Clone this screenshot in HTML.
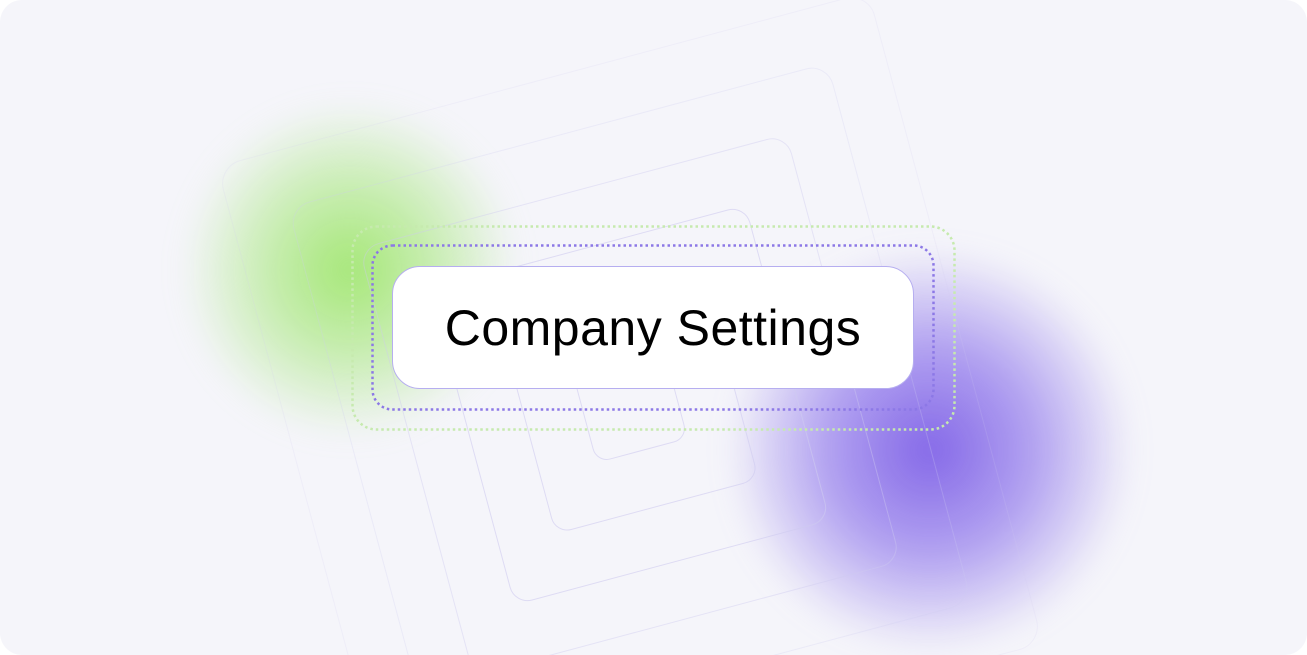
<!DOCTYPE html>
<html><head><style>
html,body{margin:0;padding:0;background:#fff;overflow:hidden;width:1307px;height:655px;}
.wrap{position:relative;width:1307px;height:655px;overflow:hidden;background:#f5f5fa;border-radius:22px;}
.blob{position:absolute;border-radius:50%;}
.card{position:absolute;left:392px;top:266px;width:520px;height:121px;background:#fff;border:1px solid #b6aef0;border-radius:28px;display:flex;align-items:center;justify-content:center;font-family:"Liberation Sans",sans-serif;font-size:50px;color:#000;letter-spacing:0.5px;}
</style></head><body>
<div class="wrap">
<div class="blob" style="left:180px;top:100px;width:340px;height:340px;background:radial-gradient(circle,rgba(160,230,110,0.95) 0%,rgba(170,232,130,0.6) 35%,rgba(200,240,180,0) 70%);filter:blur(14px);"></div>
<div class="blob" style="left:720px;top:250px;width:420px;height:400px;background:radial-gradient(circle,rgba(125,95,230,0.95) 0%,rgba(140,115,235,0.65) 35%,rgba(180,165,240,0) 70%);filter:blur(14px);"></div>
<svg width="1307" height="655" style="position:absolute;left:0;top:0;display:block">
<g fill="none" stroke="#cfcbf0" stroke-width="1" opacity="0.6" transform="rotate(-15 630 405)">
<rect x="583" y="358" width="94" height="94" rx="14"/>
<rect x="525" y="300" width="210" height="210" rx="16"/>
<rect x="467" y="242" width="326" height="326" rx="18"/>
<rect x="409" y="184" width="442" height="442" rx="20" opacity="0.7"/>
<rect x="351" y="126" width="558" height="558" rx="22" opacity="0.45"/>
<rect x="293" y="68" width="674" height="674" rx="24" opacity="0.3"/>
</g>
<rect x="352.5" y="226.5" width="602" height="203" rx="24" fill="none" stroke="#c6eaae" stroke-width="2.5" stroke-dasharray="2.5 3"/>
<rect x="372.5" y="245.5" width="561" height="164" rx="20" fill="none" stroke="#8c78e6" stroke-width="2.5" stroke-dasharray="2.5 3"/>
</svg>
<div class="card">Company Settings</div>
</div>
</body></html>
